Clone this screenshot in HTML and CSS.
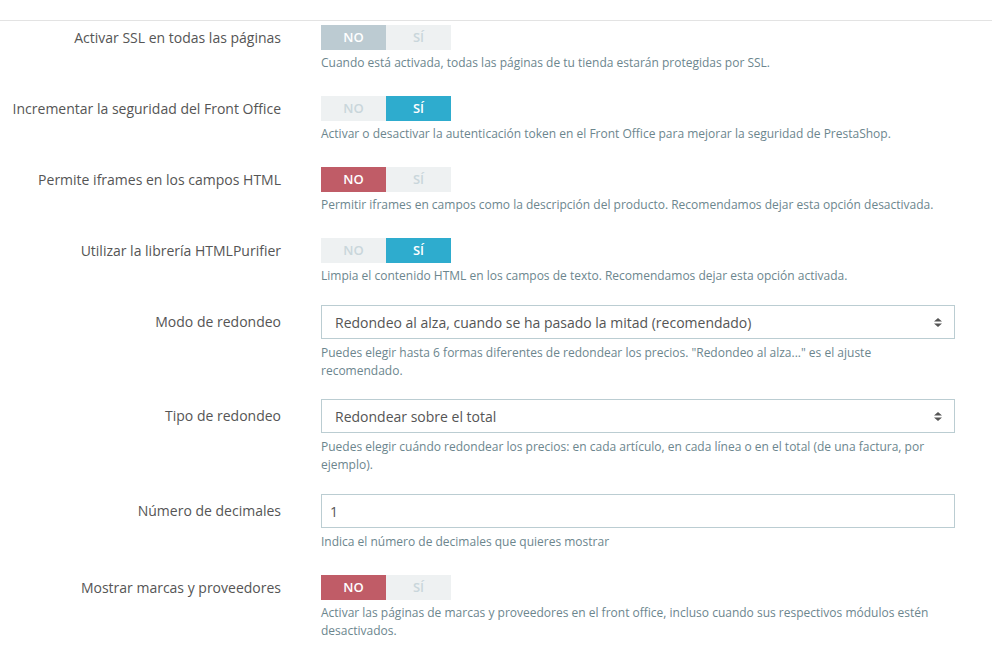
FILE: index.html
```html
<!DOCTYPE html>
<html lang="es">
<head>
    <meta charset="UTF-8">
    <meta name="viewport" content="width=device-width, initial-scale=1.0">
    <title>Preferencias generales</title>
    <link rel="stylesheet" href="styles.css">
</head>
<body>
    <div class="panel-top"></div>

    <form class="form-wrapper">
        <div class="form-group switch-row">
            <label class="control-label">Activar SSL en todas las páginas</label>
            <div class="control">
                <span class="switch">
                    <span class="switch-opt on-grey">NO</span>
                    <span class="switch-opt">SÍ</span>
                </span>
                <p class="help-block">Cuando está activada, todas las páginas de tu tienda estarán protegidas por SSL.</p>
            </div>
        </div>

        <div class="form-group switch-row">
            <label class="control-label">Incrementar la seguridad del Front Office</label>
            <div class="control">
                <span class="switch">
                    <span class="switch-opt">NO</span>
                    <span class="switch-opt on-blue">SÍ</span>
                </span>
                <p class="help-block">Activar o desactivar la autenticación token en el Front Office para mejorar la seguridad de PrestaShop.</p>
            </div>
        </div>

        <div class="form-group switch-row">
            <label class="control-label">Permite iframes en los campos HTML</label>
            <div class="control">
                <span class="switch">
                    <span class="switch-opt on-red">NO</span>
                    <span class="switch-opt">SÍ</span>
                </span>
                <p class="help-block">Permitir iframes en campos como la descripción del producto. Recomendamos dejar esta opción desactivada.</p>
            </div>
        </div>

        <div class="form-group switch-row short">
            <label class="control-label">Utilizar la librería HTMLPurifier</label>
            <div class="control">
                <span class="switch">
                    <span class="switch-opt">NO</span>
                    <span class="switch-opt on-blue">SÍ</span>
                </span>
                <p class="help-block">Limpia el contenido HTML en los campos de texto. Recomendamos dejar esta opción activada.</p>
            </div>
        </div>

        <div class="form-group tall">
            <label class="control-label">Modo de redondeo</label>
            <div class="control">
                <div class="select-box">
                    <span>Redondeo al alza, cuando se ha pasado la mitad (recomendado)</span>
                    <svg class="caret" width="8" height="9" viewBox="0 0 8 9">
                        <path d="M0 3.5 L4 0 L8 3.5 Z M0 5.5 L8 5.5 L4 9 Z" fill="#555"/>
                    </svg>
                </div>
                <p class="help-block">Puedes elegir hasta 6 formas diferentes de redondear los precios. "Redondeo al alza..." es el ajuste recomendado.</p>
            </div>
        </div>

        <div class="form-group tall wide-gap">
            <label class="control-label">Tipo de redondeo</label>
            <div class="control">
                <div class="select-box">
                    <span>Redondear sobre el total</span>
                    <svg class="caret" width="8" height="9" viewBox="0 0 8 9">
                        <path d="M0 3.5 L4 0 L8 3.5 Z M0 5.5 L8 5.5 L4 9 Z" fill="#555"/>
                    </svg>
                </div>
                <p class="help-block">Puedes elegir cuándo redondear los precios: en cada artículo, en cada línea o en el total (de una factura, por ejemplo).</p>
            </div>
        </div>

        <div class="form-group tall text-row">
            <label class="control-label">Número de decimales</label>
            <div class="control">
                <input type="text" class="text-input" value="1">
                <p class="help-block">Indica el número de decimales que quieres mostrar</p>
            </div>
        </div>

        <div class="form-group switch-row">
            <label class="control-label">Mostrar marcas y proveedores</label>
            <div class="control">
                <span class="switch">
                    <span class="switch-opt on-red">NO</span>
                    <span class="switch-opt">SÍ</span>
                </span>
                <p class="help-block">Activar las páginas de marcas y proveedores en el front office, incluso cuando sus respectivos módulos estén desactivados.</p>
            </div>
        </div>
    </form>
</body>
</html>
```

FILE: styles.css
```css
* {
    box-sizing: border-box;
    font-family: 'Open Sans', sans-serif;
}

body {
    margin: 0;
    padding: 0;
    background-color: #fff;
    color: #555;
}

.panel-top {
    height: 21px;
    border-bottom: 1px solid #e3e3e3;
}

.form-wrapper {
    padding-top: 4px;
}

.form-group {
    display: flex;
    align-items: flex-start;
    margin-bottom: 19px;
}

.switch-row {
    margin-bottom: 24px;
}

.switch-row.short,
.form-group.wide-gap {
    margin-bottom: 20px;
}

.text-row {
    margin-bottom: 24px;
}

.control-label {
    width: 281px;
    flex-shrink: 0;
    text-align: right;
    font-size: 14px;
    line-height: 25px;
    color: #555;
}

.tall .control-label {
    line-height: 34px;
}

.control {
    margin-left: 40px;
    width: 634px;
}

.switch {
    display: flex;
    width: 130px;
    height: 25px;
    background-color: #eef1f2;
}

.switch-opt {
    width: 65px;
    text-align: center;
    font-size: 13px;
    font-weight: 600;
    line-height: 25px;
    color: #c9d6db;
}

.switch-opt.on-grey {
    background-color: #bccbd2;
    color: #fff;
}

.switch-opt.on-blue {
    background-color: #2eacce;
    color: #fff;
}

.switch-opt.on-red {
    background-color: #c05c67;
    color: #fff;
}

.help-block {
    margin: 4px 0 0;
    font-size: 12px;
    line-height: 18px;
    color: #6c868e;
}

.tall .help-block {
    margin-top: 5px;
}

.select-box {
    display: flex;
    align-items: center;
    justify-content: space-between;
    height: 34px;
    padding: 0 12px 0 13px;
    border: 1px solid #bbcdd2;
    font-size: 14px;
    color: #555;
}

.caret {
    display: block;
}

.text-input {
    display: block;
    width: 100%;
    height: 34px;
    padding: 0 8px;
    border: 1px solid #bbcdd2;
    border-radius: 0;
    font-size: 14px;
    color: #555;
    outline: none;
}
```
